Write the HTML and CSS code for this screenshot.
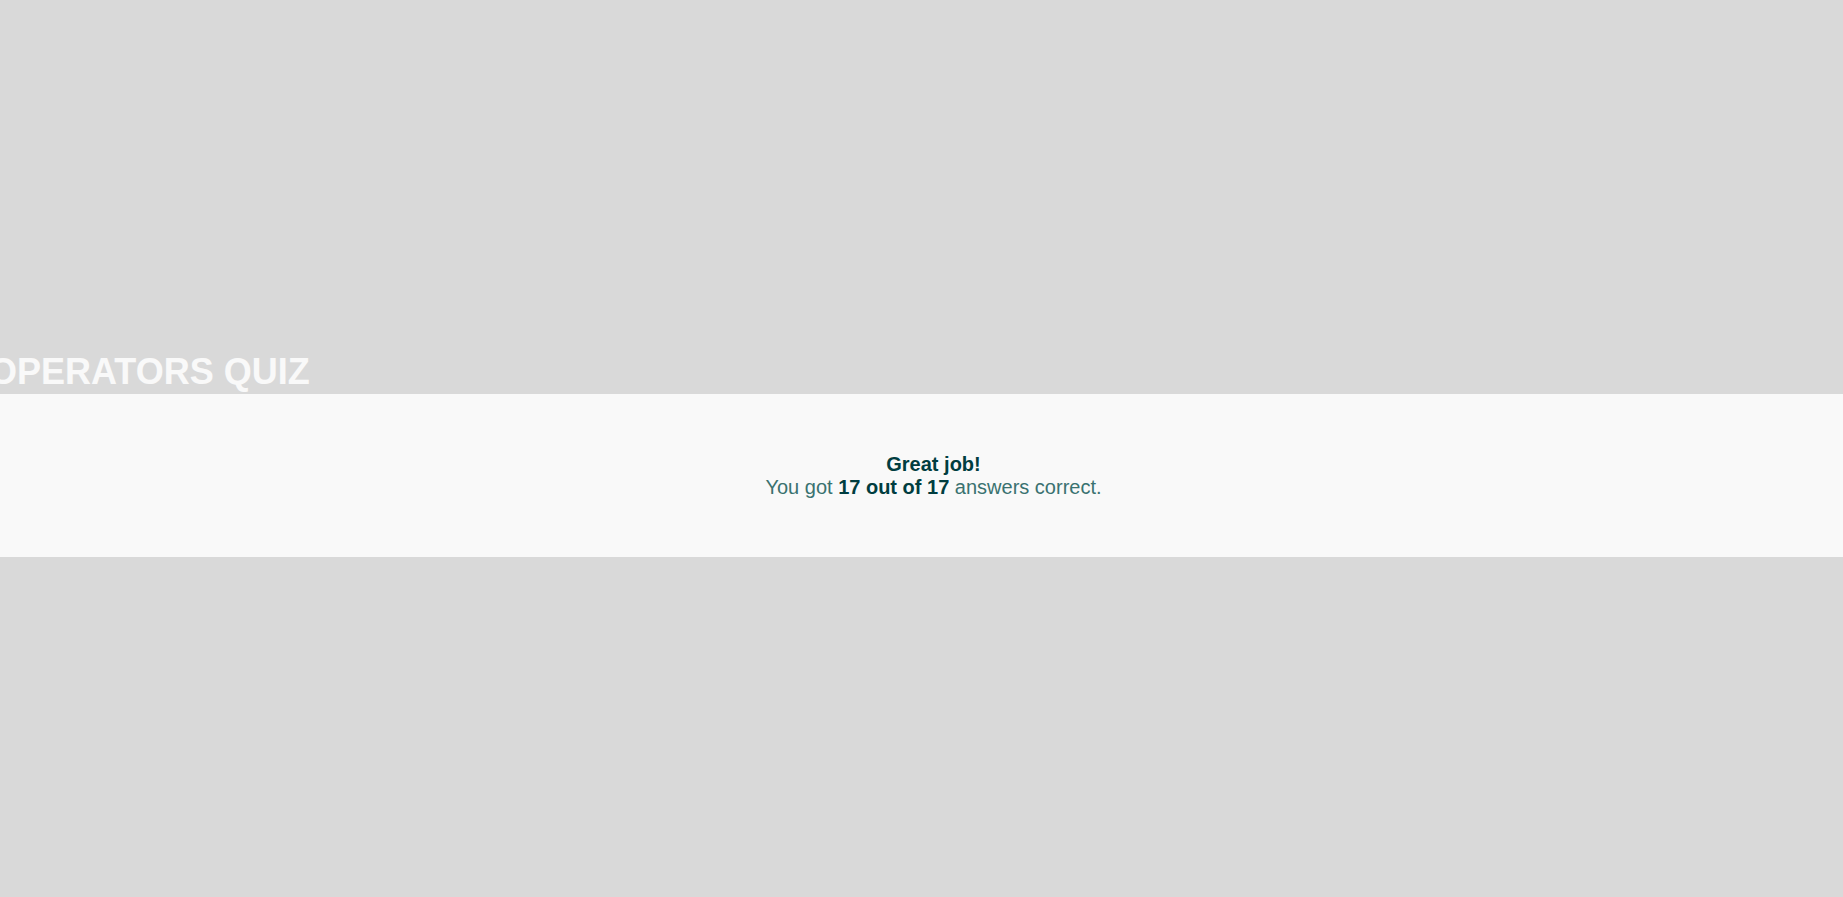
FILE: index.html
```html
<!DOCTYPE html>
<html>
<head>
<meta charset="utf-8">
<link rel="stylesheet" href="styles.css">
</head>
<body>
<div class="page">
  <h1 class="title">OPERATORS QUIZ</h1>
  <div class="band">
    <div class="result">
      <div class="headline">Great job!</div>
      <div class="score">You got <b>17 out of 17</b> answers correct.</div>
    </div>
  </div>
</div>
</body>
</html>
```
FILE: styles.css
```css
html, body {
  margin: 0;
  padding: 0;
  background: #d9d9d9;
  font-family: "Liberation Sans", Arial, sans-serif;
  overflow: hidden;
}
.page {
  padding-top: 348px;
}
.title {
  margin: 0 0 0 -11px;
  padding-top: 1px;
  font-size: 36px;
  line-height: 45px;
  font-weight: bold;
  color: #f9f9f9;
}
.band {
  background: #f9f9f9;
  height: 163px;
  display: flex;
  align-items: center;
  justify-content: center;
  padding-left: 24px;
}
.result {
  text-align: center;
  font-size: 20px;
  line-height: 23px;
  color: #3a7270;
}
.headline {
  font-weight: bold;
  color: #003d40;
}
.score b {
  color: #003d40;
}
```
